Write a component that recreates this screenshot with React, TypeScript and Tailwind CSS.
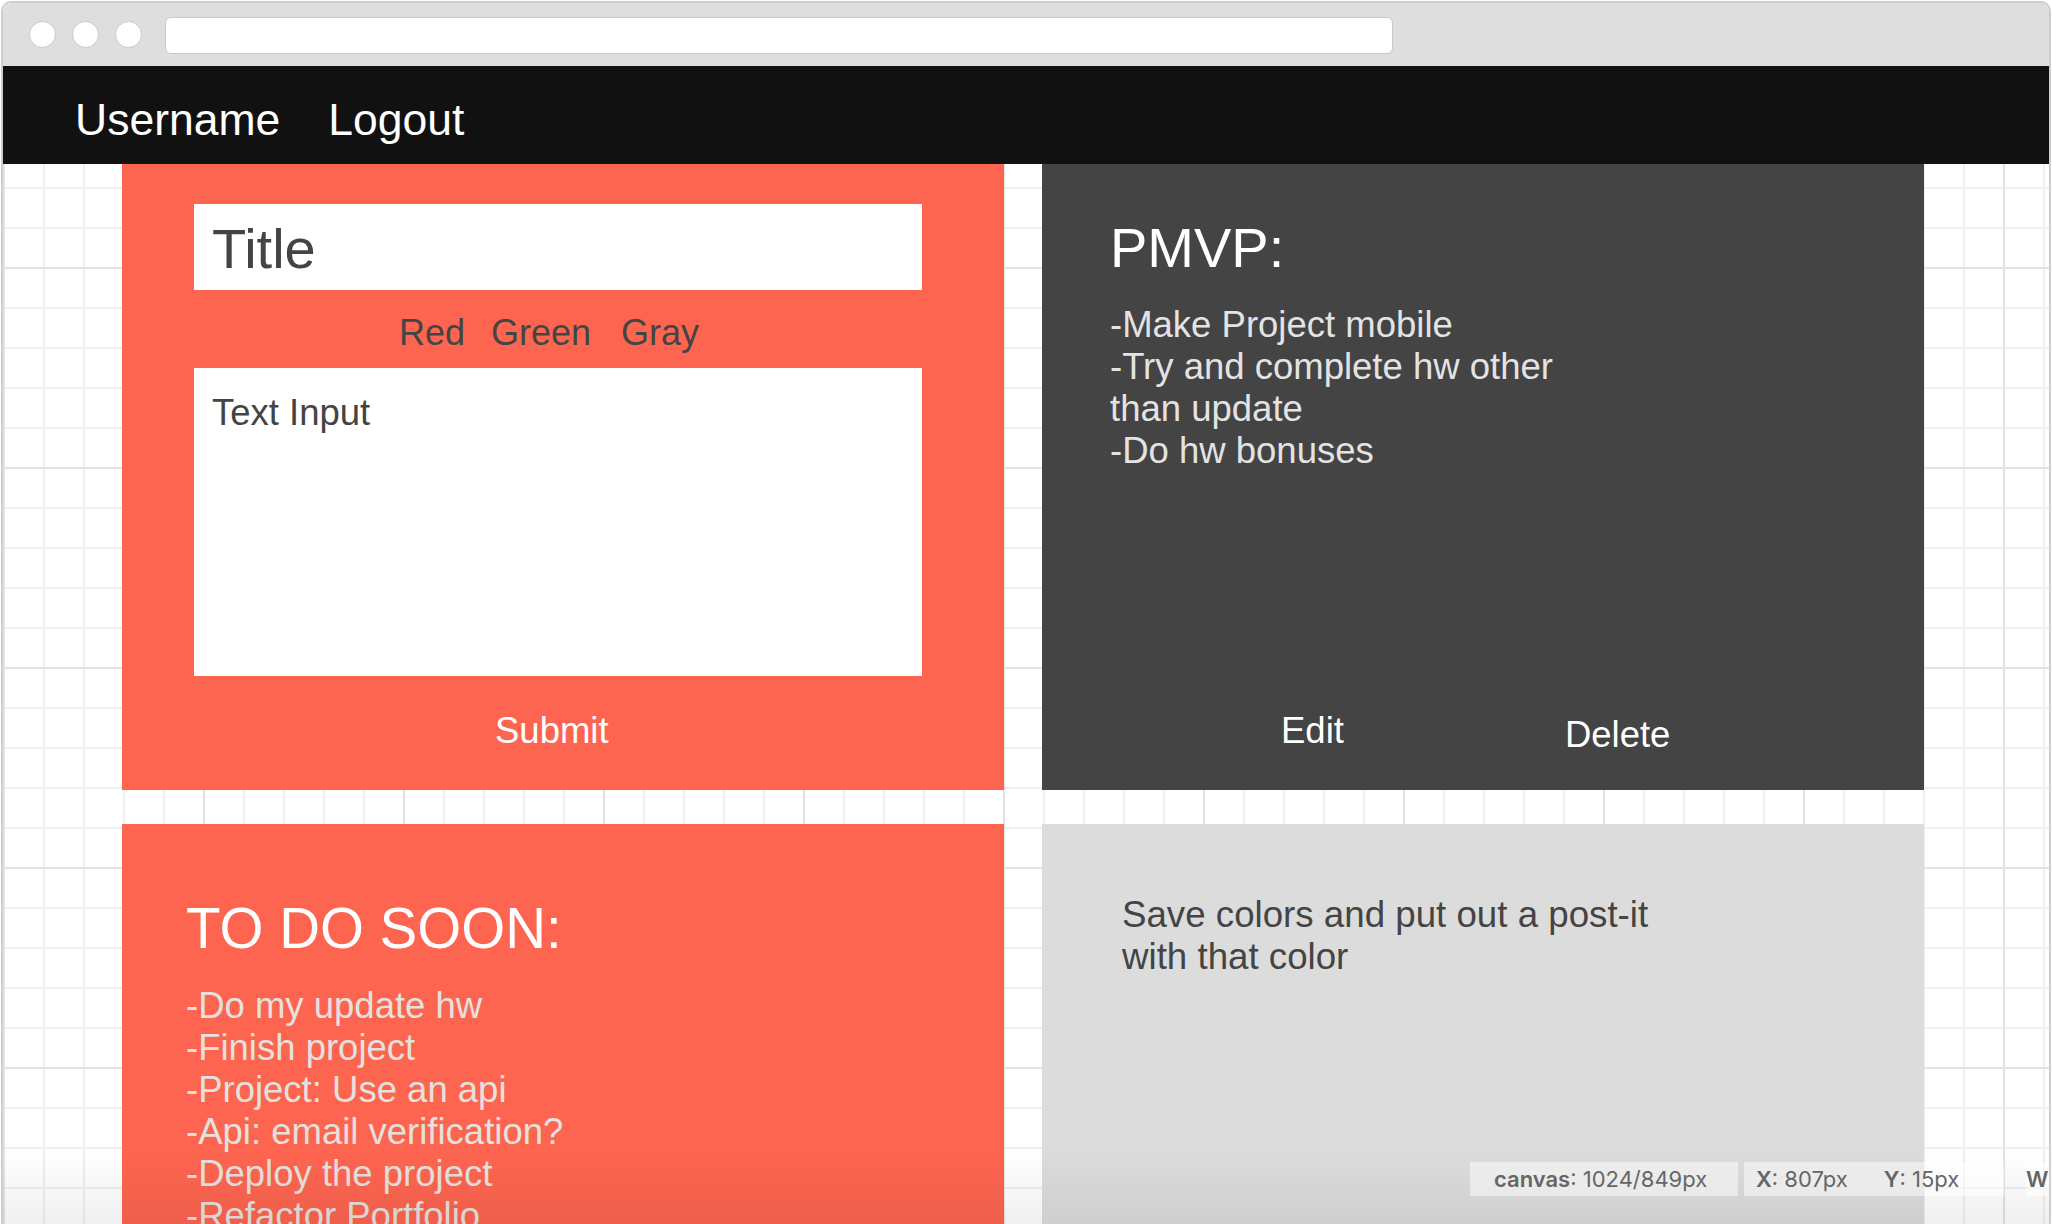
const body = "font-['Liberation_Sans',Arial,sans-serif]";

const pmvp = [
  '-Make Project mobile',
  '-Try and complete hw other',
  'than update',
  '-Do hw bonuses',
];

const soon = [
  '-Do my update hw',
  '-Finish project',
  '-Project: Use an api',
  '-Api: email verification?',
  '-Deploy the project',
  '-Refactor Portfolio',
];

function BrowserBar() {
  return (
    <div className="flex h-[63px] shrink-0 items-center bg-[#dedede] pl-[26px]">
      <div className="flex gap-[16px]">
        <span className="h-[27px] w-[27px] rounded-full border border-[#c9c9c9] bg-white" />
        <span className="h-[27px] w-[27px] rounded-full border border-[#c9c9c9] bg-white" />
        <span className="h-[27px] w-[27px] rounded-full border border-[#c9c9c9] bg-white" />
      </div>
      <div className="ml-[23px] mt-[1px] h-[37px] w-[1228px] rounded-[6px] border border-[#c9c9c9] bg-white" />
    </div>
  );
}

function NoteForm() {
  return (
    <div className="flex h-[626px] flex-col bg-[#fe6550] pl-[72px] pr-[82px] pt-[40px] text-[#444]">
      <div className="h-[86px] bg-white pl-[18px] pt-[4px] text-[56px] leading-[82px]">Title</div>
      {/* colour picker */}
      <div className="mt-[22px] flex pl-[205px] text-[36px] leading-[42px]">
        <span>Red</span>
        <span className="ml-[26px]">Green</span>
        <span className="ml-[30px]">Gray</span>
      </div>
      <div className="mt-[14px] h-[308px] bg-white pl-[18px] pt-[24px] text-[36.5px] leading-[42px]">
        Text Input
      </div>
      <div className="mt-[34px] pl-[301px] text-[36.5px] leading-[42px] text-white">Submit</div>
    </div>
  );
}

function GrayNote() {
  return (
    <div className="flex h-[626px] flex-col bg-[#444444] pb-[34px] pl-[68px] pt-[52px]">
      <div className="text-[56px] leading-[64px] text-white">PMVP:</div>
      <div className="mt-[24px] text-[36.5px] leading-[42px] text-[#e3e3e3]">
        {pmvp.map((line) => (
          <div key={line}>{line}</div>
        ))}
      </div>
      <div className="mt-auto flex items-start pl-[171px] text-[36.5px] leading-[42px] text-white">
        <span>Edit</span>
        <span className="ml-[221px] mt-[4px]">Delete</span>
      </div>
    </div>
  );
}

function RedNote() {
  return (
    <div className="h-[600px] bg-[#fe6550] pl-[64px] pt-[73px]">
      <div className="text-[56.5px] leading-[64px] text-white">TO DO SOON:</div>
      <div className="mt-[24px] text-[36.5px] leading-[42px] text-[#e6e1de]">
        {soon.map((line) => (
          <div key={line}>{line}</div>
        ))}
      </div>
    </div>
  );
}

function LightNote() {
  return (
    <div className="h-[600px] bg-[#dcdcdc] pl-[80px] pt-[70px] text-[36.7px] leading-[42px] text-[#444]">
      <div>Save colors and put out a post-it</div>
      <div>with that color</div>
    </div>
  );
}

export default function App() {
  return (
    <div className={`h-[1224px] w-[2052px] overflow-hidden bg-white px-[1px] pt-[1px] ${body}`}>
      <div className="flex h-full flex-col overflow-hidden rounded-t-[10px] border-2 border-b-0 border-[#cdcdcd]">
        <BrowserBar />

        {/* top nav */}
        <nav className="flex h-[98px] shrink-0 items-center gap-[48px] bg-[#111111] pl-[72px] pt-[10px] text-[44.5px] leading-[50px] text-white">
          <span>Username</span>
          <span>Logout</span>
        </nav>

        {/* canvas */}
        <div className="relative min-h-0 flex-1 overflow-hidden bg-white bg-[linear-gradient(to_right,#e3e3e3_2px,transparent_2px),linear-gradient(to_bottom,#e3e3e3_2px,transparent_2px),linear-gradient(to_right,#efefef_2px,transparent_2px),linear-gradient(to_bottom,#efefef_2px,transparent_2px)] bg-[length:200px_200px,200px_200px,40px_40px,40px_40px] bg-[position:0_103px,0_103px,0_23px,0_23px]">
          <div className="grid grid-cols-[882px_882px] gap-x-[38px] gap-y-[34px] pl-[119px]">
            <NoteForm />
            <GrayNote />
            <RedNote />
            <LightNote />
          </div>

          {/* bottom fade + status readout */}
          <div className="absolute bottom-0 left-0 right-0 h-[76px] bg-linear-to-b from-transparent to-black/[0.06]" />
          <div className="absolute bottom-[28px] left-[1467px] flex h-[34px] font-['Inter',sans-serif] text-[22px] leading-[35px] text-[#666]">
            <div className="w-[268px] bg-white/50 pl-[24px]">
              <b className="font-semibold">canvas</b>: 1024/849px
            </div>
            <div className="ml-[6px] flex w-[260px] bg-white/50 pl-[12px]">
              <span>
                <b className="font-semibold">X</b>: 807px
              </span>
              <span className="ml-[36px]">
                <b className="font-semibold">Y</b>: 15px
              </span>
            </div>
            <div className="ml-[22px] w-[80px] bg-white/50">
              <b className="font-semibold">W</b>
            </div>
          </div>
        </div>
      </div>
    </div>
  );
}
